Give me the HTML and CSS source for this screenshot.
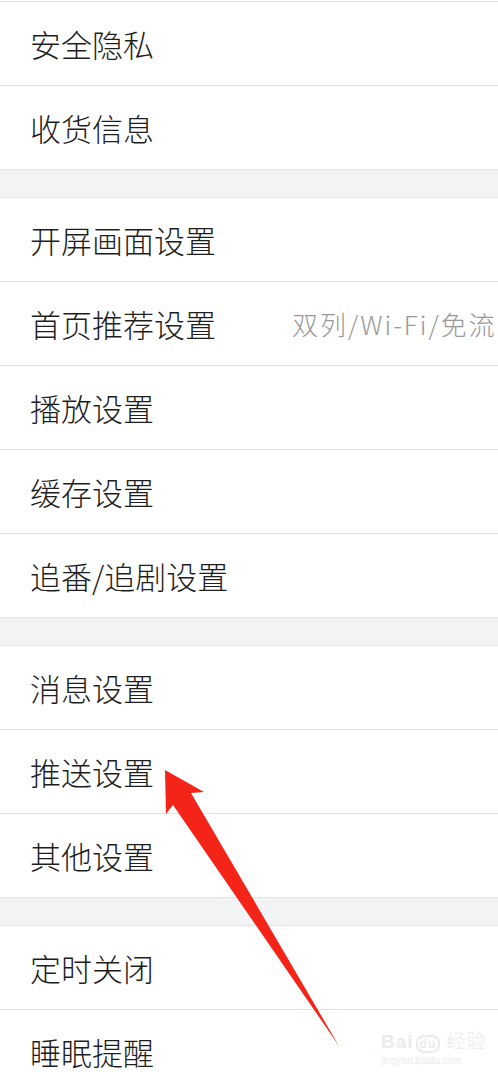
FILE: index.html
```html
<!DOCTYPE html>
<html lang="zh-CN">
<head>
<meta charset="UTF-8">
<meta name="viewport" content="width=device-width, initial-scale=1.0">
<title>设置</title>
<link rel="stylesheet" href="styles.css">
</head>
<body>

<div class="page">
    <div class="group">
        <div class="row"><span class="label">安全隐私</span></div>
        <div class="row"><span class="label">收货信息</span></div>
    </div>
    <div class="gap"></div>
    <div class="group">
        <div class="row"><span class="label">开屏画面设置</span></div>
        <div class="row"><span class="label">首页推荐设置</span><span class="value">双列/Wi-Fi/免流</span></div>
        <div class="row"><span class="label">播放设置</span></div>
        <div class="row"><span class="label">缓存设置</span></div>
        <div class="row"><span class="label">追番/追剧设置</span></div>
    </div>
    <div class="gap"></div>
    <div class="group">
        <div class="row"><span class="label">消息设置</span></div>
        <div class="row"><span class="label">推送设置</span></div>
        <div class="row"><span class="label">其他设置</span></div>
    </div>
    <div class="gap"></div>
    <div class="group">
        <div class="row"><span class="label">定时关闭</span></div>
        <div class="row"><span class="label">睡眠提醒</span></div>
    </div>

    <!-- red pointer drawn over the list -->
    <svg class="arrow" width="498" height="1075" viewBox="0 0 498 1075">
        <polygon points="165,770 204,792 191,793 339,1046 173,805 166,814" fill="#f42419"/>
    </svg>

    <div class="watermark">
        <div class="wm-logo">Bai<span class="wm-du">du</span> <span class="wm-cn">经验</span></div>
        <div class="wm-url">jingyan.baidu.com</div>
    </div>
</div>

</body>
</html>
```

FILE: styles.css
```css
body {
    margin: 0;
    background-color: #fff;
    font-family: "Noto Sans CJK SC", "Noto Sans", sans-serif;
}

.page {
    position: relative;
    width: 498px;
    height: 1075px;
    padding-top: 1px;
    box-sizing: border-box;
    overflow: hidden;
}

.group {
    border-top: 1px solid #e3e3e5;
    background-color: #fff;
}

.row {
    display: grid;
    grid-template-columns: 262px 1fr;
    align-items: center;
    height: 83px;
    padding-left: 30px;
    border-bottom: 1px solid #e3e3e5;
    overflow: hidden;
}

.row:last-child {
    border-bottom: none;
}

.group + .gap {
    border-top: 1px solid #e3e3e5;
}

.gap {
    height: 27px;
    background-color: #f2f3f5;
}

.label {
    font-size: 31px;
    font-weight: 300;
    line-height: 1;
    color: #1e1e1e;
    white-space: nowrap;
}

.value {
    font-size: 26px;
    font-weight: 300;
    line-height: 1;
    letter-spacing: 2px;
    color: #999;
    white-space: nowrap;
}

.arrow {
    position: absolute;
    top: 0;
    left: 0;
}

.watermark {
    position: absolute;
    left: 381px;
    top: 1026px;
    color: #ebebeb;
    font-family: "Liberation Sans", sans-serif;
}

.wm-logo {
    font-size: 19px;
    font-weight: bold;
    letter-spacing: 1px;
}

.wm-du {
    display: inline-block;
    margin-left: 2px;
    padding: 0 2px;
    border-radius: 8px;
    border: 2px solid #ebebeb;
    font-size: 12px;
}

.wm-cn {
    font-family: "Noto Sans CJK SC", sans-serif;
    font-weight: 400;
    color: #efefef;
}

.wm-url {
    font-size: 10px;
    margin-top: 2px;
}
```
